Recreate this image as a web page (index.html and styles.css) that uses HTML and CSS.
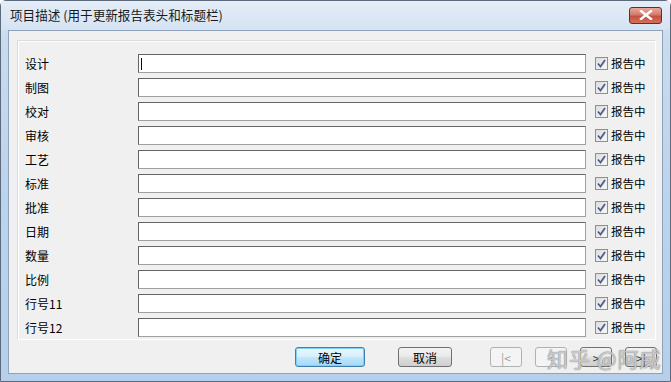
FILE: index.html
```html
<!DOCTYPE html>
<html lang="zh-CN">
<head>
  <meta charset="UTF-8" />
  <title>项目描述</title>
  <link rel="stylesheet" href="styles.css">
</head>
<body>
  <div class="window">
    <div class="titlebar">
      <span class="title">项目描述 (用于更新报告表头和标题栏)</span>
      <div class="close">
        <svg width="14" height="10" viewBox="0 0 14 10">
          <path d="M2 1 L12 9 M12 1 L2 9" stroke="#fff" stroke-width="2.4" stroke-linecap="square"/>
        </svg>
      </div>
    </div>

    <div class="client">
      <div class="group">
        <div class="row">
          <span class="label">设计</span>
          <div class="field"><span class="caret"></span></div>
          <label class="check"><span class="box"><svg width="11" height="11" viewBox="0 0 11 11"><path d="M2 5.5 L4.5 8.5 L9 2" fill="none" stroke="#4d5f93" stroke-width="1.8"/></svg></span>报告中</label>
        </div>
        <div class="row">
          <span class="label">制图</span>
          <div class="field"></div>
          <label class="check"><span class="box"><svg width="11" height="11" viewBox="0 0 11 11"><path d="M2 5.5 L4.5 8.5 L9 2" fill="none" stroke="#4d5f93" stroke-width="1.8"/></svg></span>报告中</label>
        </div>
        <div class="row">
          <span class="label">校对</span>
          <div class="field"></div>
          <label class="check"><span class="box"><svg width="11" height="11" viewBox="0 0 11 11"><path d="M2 5.5 L4.5 8.5 L9 2" fill="none" stroke="#4d5f93" stroke-width="1.8"/></svg></span>报告中</label>
        </div>
        <div class="row">
          <span class="label">审核</span>
          <div class="field"></div>
          <label class="check"><span class="box"><svg width="11" height="11" viewBox="0 0 11 11"><path d="M2 5.5 L4.5 8.5 L9 2" fill="none" stroke="#4d5f93" stroke-width="1.8"/></svg></span>报告中</label>
        </div>
        <div class="row">
          <span class="label">工艺</span>
          <div class="field"></div>
          <label class="check"><span class="box"><svg width="11" height="11" viewBox="0 0 11 11"><path d="M2 5.5 L4.5 8.5 L9 2" fill="none" stroke="#4d5f93" stroke-width="1.8"/></svg></span>报告中</label>
        </div>
        <div class="row">
          <span class="label">标准</span>
          <div class="field"></div>
          <label class="check"><span class="box"><svg width="11" height="11" viewBox="0 0 11 11"><path d="M2 5.5 L4.5 8.5 L9 2" fill="none" stroke="#4d5f93" stroke-width="1.8"/></svg></span>报告中</label>
        </div>
        <div class="row">
          <span class="label">批准</span>
          <div class="field"></div>
          <label class="check"><span class="box"><svg width="11" height="11" viewBox="0 0 11 11"><path d="M2 5.5 L4.5 8.5 L9 2" fill="none" stroke="#4d5f93" stroke-width="1.8"/></svg></span>报告中</label>
        </div>
        <div class="row">
          <span class="label">日期</span>
          <div class="field"></div>
          <label class="check"><span class="box"><svg width="11" height="11" viewBox="0 0 11 11"><path d="M2 5.5 L4.5 8.5 L9 2" fill="none" stroke="#4d5f93" stroke-width="1.8"/></svg></span>报告中</label>
        </div>
        <div class="row">
          <span class="label">数量</span>
          <div class="field"></div>
          <label class="check"><span class="box"><svg width="11" height="11" viewBox="0 0 11 11"><path d="M2 5.5 L4.5 8.5 L9 2" fill="none" stroke="#4d5f93" stroke-width="1.8"/></svg></span>报告中</label>
        </div>
        <div class="row">
          <span class="label">比例</span>
          <div class="field"></div>
          <label class="check"><span class="box"><svg width="11" height="11" viewBox="0 0 11 11"><path d="M2 5.5 L4.5 8.5 L9 2" fill="none" stroke="#4d5f93" stroke-width="1.8"/></svg></span>报告中</label>
        </div>
        <div class="row">
          <span class="label">行号11</span>
          <div class="field"></div>
          <label class="check"><span class="box"><svg width="11" height="11" viewBox="0 0 11 11"><path d="M2 5.5 L4.5 8.5 L9 2" fill="none" stroke="#4d5f93" stroke-width="1.8"/></svg></span>报告中</label>
        </div>
        <div class="row">
          <span class="label">行号12</span>
          <div class="field"></div>
          <label class="check"><span class="box"><svg width="11" height="11" viewBox="0 0 11 11"><path d="M2 5.5 L4.5 8.5 L9 2" fill="none" stroke="#4d5f93" stroke-width="1.8"/></svg></span>报告中</label>
        </div>
      </div>

      <div class="buttons">
        <button class="btn default">确定</button>
        <button class="btn cancel">取消</button>
        <div class="nav">
          <button class="btn small off">|&lt;</button>
          <button class="btn small off">&lt;</button>
          <button class="btn small">&gt;</button>
          <button class="btn small">&gt;|</button>
        </div>
        <div class="watermark">知乎 @阿威</div>
      </div>
    </div>
  </div>
</body>
</html>
```

FILE: styles.css
```css
body {
  margin: 0;
  font-family: "Noto Sans CJK SC", "Liberation Sans", sans-serif;
  font-size: 12px;
  color: #000;
}

.window {
  width: 671px;
  height: 382px;
  box-sizing: border-box;
  background: linear-gradient(to bottom, #dbe6f3 0px, #c9dbee 40px, #bcd3ec 200px, #b6cfea 382px);
  border: 1px solid #5b6b7d;
  border-radius: 6px 6px 0 0;
  display: flex;
  flex-direction: column;
}

.titlebar {
  height: 29px;
  display: flex;
  align-items: center;
  justify-content: space-between;
  padding: 0 8px 0 9px;
  background: linear-gradient(to bottom, #e4edf7, #d6e3f2);
}

.title {
  font-size: 12.6px;
  color: #1a1a1a;
  margin-top: -2px;
}

.close {
  width: 33px;
  height: 17px;
  margin-top: -1px;
  box-sizing: border-box;
  border: 1px solid #6d2a25;
  border-radius: 3px;
  background: linear-gradient(to bottom, #e9a99b 0%, #d47a6a 45%, #c4503e 55%, #d3705c 100%);
  display: flex;
  align-items: center;
  justify-content: center;
}

.client {
  flex: 1;
  margin: 0 7px 7px 7px;
  background: #f0f0f0;
  border: 1px solid #8ea3bb;
  display: flex;
  flex-direction: column;
}

.group {
  margin: 9px 6px 0 8px;
  height: 300px;
  box-sizing: border-box;
  border: 1px solid #dcdcdc;
  border-right-color: #fff;
  border-bottom-color: #fff;
  box-shadow: inset 1px 1px 0 #fff;
  padding: 10px 0 0 7px;
}

.row {
  height: 24px;
  display: flex;
  align-items: center;
}

.label {
  width: 113px;
}

.field {
  width: 448px;
  height: 19px;
  box-sizing: border-box;
  border: 1px solid #646464;
  border-color: #646464 #a0a0a0 #a0a0a0 #646464;
  background: #fff;
  position: relative;
}

.caret {
  position: absolute;
  left: 2px;
  top: 3px;
  width: 1px;
  height: 12px;
  background: #000;
}

.check {
  margin-left: 9px;
  display: flex;
  align-items: center;
  gap: 3px;
  font-size: 11.5px;
}

.box {
  width: 13px;
  height: 13px;
  box-sizing: border-box;
  border: 1px solid #8e8f8f;
  background: linear-gradient(135deg, #dcdcdc, #f8f8f8);
  display: flex;
  align-items: center;
  justify-content: center;
}

.buttons {
  position: relative;
  display: flex;
  align-items: center;
  height: 30px;
  margin-top: 2px;
  padding-left: 286px;
}

.btn {
  font-family: "Noto Sans CJK SC", "Liberation Sans", sans-serif;
  font-size: 12px;
  height: 20px;
  padding: 0;
  box-sizing: border-box;
  border: 1px solid #707070;
  border-radius: 3px;
  background: linear-gradient(to bottom, #f2f2f2 0%, #ebebeb 45%, #dddddd 55%, #cfcfcf 100%);
  color: #000;
}

.default {
  width: 70px;
  border-color: #3c7fb1;
  background: linear-gradient(to bottom, #eaf6fd 0%, #d9f0fc 45%, #bee6fd 55%, #a7d9f5 100%);
  box-shadow: inset 0 0 0 1px #7fd0f5;
}

.cancel {
  width: 54px;
  margin-left: 33px;
}

.nav {
  display: flex;
  gap: 13px;
  margin-left: 38px;
}

.small {
  width: 32px;
  color: #333;
}

.off {
  border-color: #adb2b5;
  background: #f4f4f4;
  color: #a3a3a3;
}

.watermark {
  position: absolute;
  left: 538px;
  top: 1px;
  font-size: 21px;
  color: rgba(255, 255, 255, 0.55);
  text-shadow: 0 0 1px #888, 0 0 1px #888;
  letter-spacing: 1px;
}
```
